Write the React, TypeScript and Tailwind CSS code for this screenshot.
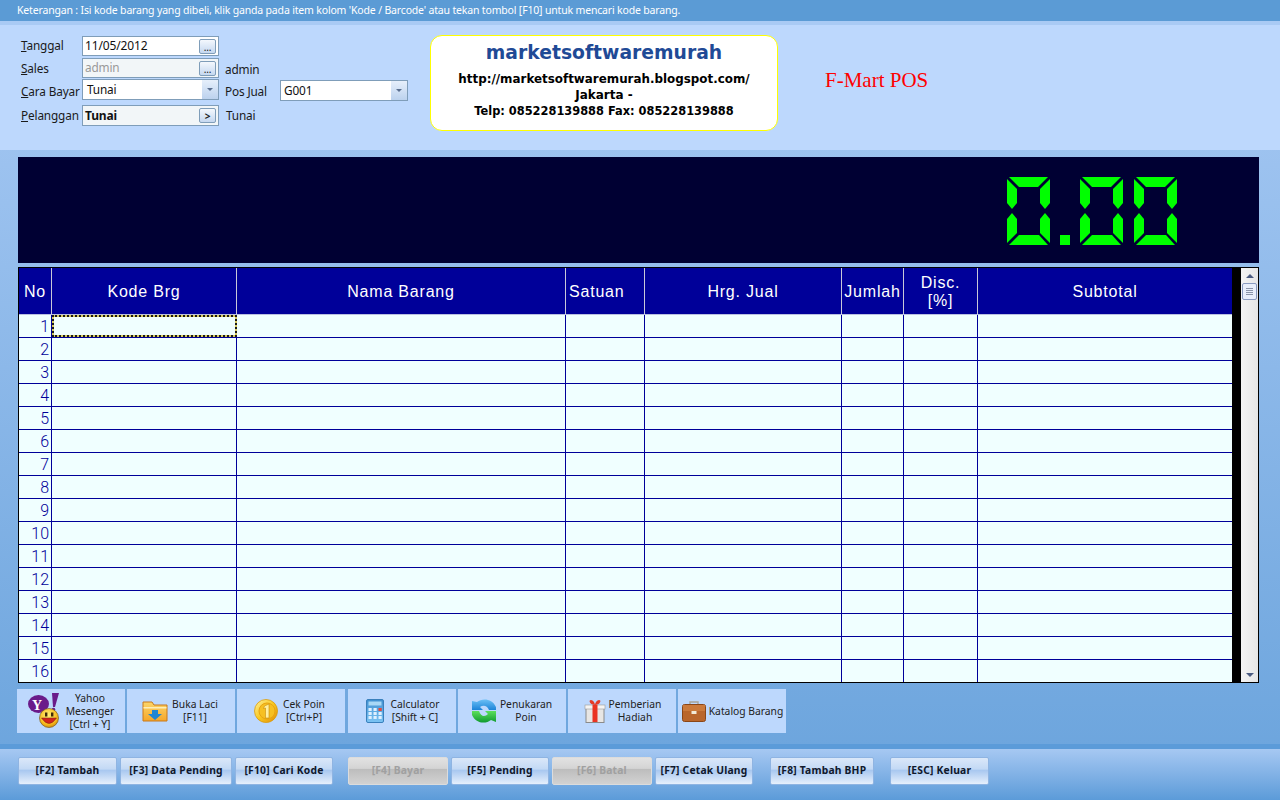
const columns = [
  { label: 'No', width: 'w-[33px]' },
  { label: 'Kode Brg', width: 'w-[185px]' },
  { label: 'Nama Barang', width: 'w-[329px]' },
  { label: 'Satuan', width: 'w-[79px]' },
  { label: 'Hrg. Jual', width: 'w-[197px]' },
  { label: 'Jumlah', width: 'w-[62px]' },
  { label: 'Disc.\n[%]', width: 'w-[74px]' },
  { label: 'Subtotal', width: 'w-[254px]' },
];

const rows = Array.from({ length: 16 }, (_, i) => i + 1);

const Digit = ({ x }: { x: number }) => (
  <g transform={`translate(${x} 0)`} fill="#00ff00">
    <polygon points="2,0 41,0 31,10 12,10" />
    <polygon points="0,2 10,12 10,26 5,32 0,26" />
    <polygon points="43,2 33,12 33,26 38,32 43,26" />
    <polygon points="5,36 10,42 10,56 0,66 0,42" />
    <polygon points="38,36 33,42 33,56 43,66 43,42" />
    <polygon points="2,68 12,58 32,58 41,68" />
  </g>
);

const LedDisplay = () => (
  <svg width="171" height="68" viewBox="0 0 171 68">
    <Digit x={0} />
    <rect x="53" y="58" width="10" height="10" fill="#00ff00" />
    <Digit x={73} />
    <Digit x={127} />
  </svg>
);

const YahooIcon = () => (
  <svg width="34" height="36" viewBox="0 0 34 36">
    <ellipse cx="10.5" cy="11" rx="10.5" ry="9" fill="#6a1b8a" />
    <text x="4" y="17" fontSize="14" fontWeight="700" fill="#fff" fontFamily="Liberation Serif">Y</text>
    <polygon points="24,0 31,0 27,14 25,14" fill="#6a1b8a" />
    <circle cx="25.5" cy="16.5" r="1.8" fill="#6a1b8a" />
    <defs>
      <radialGradient id="smile" cx="45%" cy="35%" r="70%">
        <stop offset="0%" stopColor="#fff07a" />
        <stop offset="70%" stopColor="#f6b91a" />
        <stop offset="100%" stopColor="#c98410" />
      </radialGradient>
    </defs>
    <circle cx="21" cy="25" r="9.5" fill="url(#smile)" stroke="#7a5a1c" strokeWidth="0.7" />
    <path d="M13.5 25 Q21 36 28.5 25 Z" fill="#d3241c" stroke="#7a2010" strokeWidth="0.5" />
    <rect x="17" y="19.5" width="2.4" height="4" fill="#402a08" />
    <rect x="23" y="19.5" width="2.4" height="4" fill="#402a08" />
  </svg>
);

const FolderIcon = () => (
  <svg width="26" height="22" viewBox="0 0 26 22">
    <defs>
      <linearGradient id="folder" x1="0" y1="0" x2="0" y2="1">
        <stop offset="0%" stopColor="#fcd66a" />
        <stop offset="100%" stopColor="#f5a62a" />
      </linearGradient>
    </defs>
    <path d="M1 2 H10 L12 5 H25 V21 H1 Z" fill="url(#folder)" stroke="#c9791a" />
    <rect x="1.5" y="7" width="23" height="1.5" fill="#fdeeb8" />
    <path d="M10 10 H16 V14 H20 L13 20 L6 14 H10 Z" fill="#1f86d4" />
  </svg>
);

const CoinIcon = () => (
  <svg width="24" height="26" viewBox="0 0 24 26">
    <defs>
      <linearGradient id="coin" x1="0" y1="0" x2="1" y2="1">
        <stop offset="0%" stopColor="#fff2a0" />
        <stop offset="50%" stopColor="#f8c81e" />
        <stop offset="100%" stopColor="#e08c08" />
      </linearGradient>
    </defs>
    <circle cx="12" cy="13" r="11.5" fill="url(#coin)" stroke="#d89a10" strokeWidth="0.8" />
    <circle cx="13" cy="13" r="8" fill="#f6c022" stroke="#e8a414" />
    <path d="M10.5 8 L15 6 V20 H11.5 V10 L9.5 10.5 Z" fill="#fff0a0" stroke="#c88a0c" strokeWidth="0.6" />
  </svg>
);

const CalculatorIcon = () => (
  <svg width="18" height="24" viewBox="0 0 18 24">
    <defs>
      <linearGradient id="calc" x1="0" y1="0" x2="0" y2="1">
        <stop offset="0%" stopColor="#3f8fd0" />
        <stop offset="100%" stopColor="#7cc4f4" />
      </linearGradient>
    </defs>
    <rect x="0.5" y="0.5" width="17" height="23" rx="1.5" fill="url(#calc)" stroke="#3a80bc" />
    <rect x="2.5" y="2.5" width="13" height="4" fill="#a8d8f6" />
    {[9, 13, 17].map((y) =>
      [2.5, 7.5, 12.5].map((x) => (
        <rect key={`${x}-${y}`} x={x} y={y} width="3.2" height="3" fill={x === 12.5 && y === 9 ? '#e8483a' : '#dff0ff'} />
      )),
    )}
  </svg>
);

const ExchangeIcon = () => (
  <svg width="26" height="24" viewBox="0 0 26 24">
    <defs>
      <linearGradient id="swapBlue" x1="0" y1="0" x2="0" y2="1">
        <stop offset="0%" stopColor="#6cc0f6" />
        <stop offset="100%" stopColor="#1c84d8" />
      </linearGradient>
      <linearGradient id="swapGreen" x1="0" y1="0" x2="0" y2="1">
        <stop offset="0%" stopColor="#5ce05c" />
        <stop offset="100%" stopColor="#109a30" />
      </linearGradient>
    </defs>
    <path d="M1 2 L6 3 C11 -1 21 -1 25 8 L25 11 H18 C16 6 12 6 9 8 L12 11 H1 Z" fill="url(#swapBlue)" />
    <path d="M25 23 L20 21 C15 25 5 25 1 16 L1 12 H8 C10 18 14 18 17 15 L14 12 H25 Z" fill="url(#swapGreen)" />
  </svg>
);

const GiftIcon = () => (
  <svg width="22" height="24" viewBox="0 0 22 24">
    <rect x="2" y="7" width="18" height="16.5" fill="#e8e6e4" stroke="#8a8a8a" />
    <rect x="1" y="6" width="20" height="4" fill="#f6f4f2" stroke="#9a9a9a" strokeWidth="0.6" />
    <rect x="8.5" y="6" width="5" height="17" fill="#ea3322" />
    <path d="M11 6 C6 6 4 1 7 1 C9 1 11 4 11 6 C11 4 13 1 15 1 C18 1 16 6 11 6 Z" fill="#e53a26" />
  </svg>
);

const BriefcaseIcon = () => (
  <svg width="24" height="22" viewBox="0 0 24 22">
    <path d="M8 5 V2 H16 V5" fill="none" stroke="#a9a396" strokeWidth="1.4" />
    <rect x="0.5" y="4.5" width="23" height="17" rx="2" fill="#b9662c" stroke="#8a4618" />
    <rect x="1" y="5" width="22" height="6" fill="#cb7a3c" />
    <rect x="9.5" y="11" width="5" height="3" fill="#f2ead8" />
  </svg>
);

const quickButtons = [
  { icon: <YahooIcon />, lines: ['Yahoo', 'Mesenger', '[Ctrl + Y]'], box: 'ml-0 pl-[11px]', text: 'w-[56px]' },
  { icon: <FolderIcon />, lines: ['Buka Laci', '[F11]'], box: 'ml-0 pl-[15px]', text: 'w-[54px]' },
  { icon: <CoinIcon />, lines: ['Cek Poin', '[Ctrl+P]'], box: 'ml-0 pl-[17px]', text: 'w-[52px]' },
  { icon: <CalculatorIcon />, lines: ['Calculator', '[Shift + C]'], box: 'ml-[1px] pl-[18px]', text: 'w-[62px]' },
  { icon: <ExchangeIcon />, lines: ['Penukaran', 'Poin'], box: 'ml-0 pl-[13px]', text: 'w-[58px]' },
  { icon: <GiftIcon />, lines: ['Pemberian', 'Hadiah'], box: 'ml-0 pl-[16px]', text: 'w-[58px]' },
  { icon: <BriefcaseIcon />, lines: ['Katalog Barang'], box: 'ml-0 pl-[4px]', text: 'w-[80px]' },
];

const actionButtons = [
  { label: '[F2] Tambah', width: 'w-[99px]', ml: '' },
  { label: '[F3] Data Pending', width: 'w-[112px]', ml: 'ml-[3px]' },
  { label: '[F10] Cari Kode', width: 'w-[98px]', ml: 'ml-[3px]' },
  { label: '[F4] Bayar', width: 'w-[100px]', ml: 'ml-[15px]', off: true },
  { label: '[F5] Pending', width: 'w-[98px]', ml: 'ml-[3px]' },
  { label: '[F6] Batal', width: 'w-[100px]', ml: 'ml-[3px]', off: true },
  { label: '[F7] Cetak Ulang', width: 'w-[98px]', ml: 'ml-[3px]' },
  { label: '[F8] Tambah BHP', width: 'w-[104px]', ml: 'ml-[17px]' },
  { label: '[ESC] Keluar', width: 'w-[99px]', ml: 'ml-[16px]' },
];

const FieldLabel = ({ letter, rest, nudge }: { letter: string; rest: string; nudge: string }) => (
  <span className={`w-[61px] shrink-0 whitespace-nowrap text-[#1a1a1a] ${nudge}`}>
    <span className="underline">{letter}</span>
    {rest}
  </span>
);

const SmallButton = ({ label }: { label: string }) => (
  <span className="flex h-[15px] w-[17px] items-end justify-center rounded-[2px] border border-[#7f9db9] bg-gradient-to-b from-[#f4f8fd] to-[#c5d8f0] text-[10px] leading-[12px] text-[#222]">
    {label}
  </span>
);

const ComboArrow = () => (
  <span className="flex h-full w-[16px] items-center justify-center bg-gradient-to-b from-[#e6effb] to-[#bcd2ee]">
    <span className="h-0 w-0 border-x-[3px] border-t-[3px] border-x-transparent border-t-[#5a6f8f]" />
  </span>
);

export default function App() {
  return (
    <div className="flex h-[800px] w-[1280px] flex-col overflow-hidden bg-gradient-to-b from-[#a9caf4] to-[#69a3dc] font-['Noto_Sans',sans-serif]">
      {/* hint bar */}
      <div className="flex h-[21px] shrink-0 items-center bg-[#5b9bd5] pl-[17px] text-[10.5px] tracking-[-0.17px] whitespace-nowrap text-white">
        Keterangan : Isi kode barang yang dibeli, klik ganda pada item kolom 'Kode / Barcode' atau tekan tombol [F10] untuk mencari kode barang.
      </div>

      {/* header form */}
      <div className="flex h-[129px] shrink-0 border-t-[4px] border-[#a9caf4] bg-[#bdd8fd]">
        <div className="mt-[11px] ml-[21px] flex w-[409px] shrink-0 flex-col text-[11.8px] tracking-[-0.15px]">
          <div className="flex h-[20px] items-center">
            <FieldLabel letter="T" rest="anggal" nudge="mt-0" />
            <div className="flex h-[20px] w-[137px] items-center justify-between border border-[#7f9db9] bg-white px-[2px] text-[12px] text-[#111]">
              11/05/2012
              <SmallButton label="..." />
            </div>
          </div>
          <div className="mt-[2px] flex h-[20px] items-center">
            <FieldLabel letter="S" rest="ales" nudge="mt-[2px]" />
            <div className="flex h-[20px] w-[137px] items-center justify-between border border-[#7f9db9] bg-[#f2f6f8] px-[2px] text-[#999]">
              <span className="-mt-[1px]">admin</span>
              <SmallButton label="..." />
            </div>
            <span className="mt-[3px] ml-[6px] text-[#1a1a1a]">admin</span>
          </div>
          <div className="mt-[1px] flex h-[21px] items-center">
            <FieldLabel letter="C" rest="ara Bayar" nudge="mt-[5px]" />
            <div className="flex h-[21px] w-[137px] items-center justify-between border border-[#7f9db9] bg-white pl-[4px] text-[#111]">
              Tunai
              <ComboArrow />
            </div>
            <span className="mt-[5px] ml-[6px] w-[55px] text-[#1a1a1a]">Pos Jual</span>
            <div className="mt-[2px] flex h-[21px] w-[128px] items-center justify-between border border-[#7f9db9] bg-white pl-[3px] text-[#111]">
              G001
              <ComboArrow />
            </div>
          </div>
          <div className="mt-[5px] flex h-[21px] items-center">
            <FieldLabel letter="P" rest="elanggan" nudge="mt-0" />
            <div className="flex h-[21px] w-[137px] items-center justify-between border border-[#7f9db9] bg-[#f2f6f8] px-[2px] text-[12px] font-bold text-[#111]">
              Tunai
              <SmallButton label=">" />
            </div>
            <span className="ml-[7px] text-[#1a1a1a]">Tunai</span>
          </div>
        </div>

        <div className="mt-[10px] flex h-[96px] w-[348px] shrink-0 flex-col items-center rounded-[12px] border border-[#ffff00] bg-white font-['DejaVu_Sans',sans-serif]">
          <div className="mt-[3px] text-[18.75px] leading-[28px] font-bold text-[#1f4a96]">marketsoftwaremurah</div>
          <div className="mt-[4px] text-center leading-[16px] font-bold text-black">
            <div className="text-[11.9px]">http://marketsoftwaremurah.blogspot.com/</div>
            <div className="text-[12px]">Jakarta -</div>
            <div className="text-[11.4px]">Telp: 085228139888 Fax: 085228139888</div>
          </div>
        </div>

        <div className="mt-[43px] ml-[47px] font-['Liberation_Serif',serif] text-[21px] leading-[24px] text-[#ff0000]">F-Mart POS</div>
      </div>

      {/* total display */}
      <div className="mt-[7px] ml-[18px] flex h-[106px] w-[1241px] shrink-0 items-start justify-end bg-[#000033] pt-[20px] pr-[81px]">
        <LedDisplay />
      </div>

      {/* grid */}
      <div className="mt-[4px] ml-[18px] flex h-[416px] w-[1241px] shrink-0 border border-black bg-black">
        <div className="w-[1213px] shrink-0 overflow-hidden">
          <div className="flex h-[47px] border-b border-[#b9c0e0] bg-[#000099] font-['Liberation_Sans',sans-serif] text-[16px] tracking-[0.8px] text-white">
            {columns.map((col, i) => (
              <div
                key={col.label}
                className={`${col.width} flex shrink-0 items-center pt-[1px] leading-[18px] whitespace-pre-line ${
                  col.label === 'Satuan' ? 'justify-start pl-[3px]' : 'justify-center text-center'
                } ${i < columns.length - 1 ? 'border-r border-[#c8c8d8]' : ''}`}
              >
                {col.label}
              </div>
            ))}
          </div>
          {rows.map((row) => (
            <div key={row} className="flex h-[23px] border-b border-[#000099] bg-[#f0ffff]">
              {columns.map((col, i) => {
                if (i === 0)
                  return (
                    <div
                      key={col.label}
                      className={`${col.width} shrink-0 border-r border-[#000099] pr-[2px] text-right font-['Roboto',sans-serif] text-[16px] leading-[23px] font-light text-[#000099]`}
                    >
                      {row}
                    </div>
                  );
                if (i === 1 && row === 1)
                  return (
                    <div key={col.label} className={`${col.width} shrink-0 border-2 border-dotted border-[#1a1a1a] bg-[#d8cc60]`}>
                      <div className="h-full bg-[#f0ffff]" />
                    </div>
                  );
                return (
                  <div
                    key={col.label}
                    className={`${col.width} shrink-0 ${i < columns.length - 1 ? 'border-r border-[#000099]' : ''}`}
                  />
                );
              })}
            </div>
          ))}
        </div>
        <div className="ml-[9px] flex w-[17px] shrink-0 flex-col items-center bg-gradient-to-r from-[#f4f4f4] to-[#e6e6e6] pt-[6px] pb-[5px]">
          <span className="h-0 w-0 border-x-[4px] border-b-[4px] border-x-transparent border-b-[#4a5a80]" />
          <span className="mt-[5px] flex h-[17px] w-[15px] flex-col items-center justify-center gap-[1px] rounded-[2px] border border-[#8a9bc0] bg-[#e8eefa]">
            <span className="h-[1px] w-[7px] bg-[#8a94a8]" />
            <span className="h-[1px] w-[7px] bg-[#8a94a8]" />
            <span className="h-[1px] w-[7px] bg-[#8a94a8]" />
            <span className="h-[1px] w-[7px] bg-[#8a94a8]" />
          </span>
          <span className="mt-auto h-0 w-0 border-x-[4px] border-t-[4px] border-x-transparent border-t-[#4a5a80]" />
        </div>
      </div>

      {/* quick buttons */}
      <div className="mt-[6px] ml-[17px] flex shrink-0 gap-[2px]">
        {quickButtons.map((btn) => (
          <div key={btn.lines[0]} className={`flex h-[44px] w-[108px] items-center bg-[#bdd8fd] ${btn.box}`}>
            <span className="flex shrink-0 items-center justify-center">{btn.icon}</span>
            <span className={`${btn.text} shrink-0 text-center text-[10.3px] leading-[13px] text-[#222]`}>
              {btn.lines.map((line) => (
                <div key={line} className="whitespace-nowrap">{line}</div>
              ))}
            </span>
          </div>
        ))}
      </div>

      {/* action bar */}
      <div className="mt-auto flex h-[56px] shrink-0 border-t-[5px] border-[#5b9bd9] bg-gradient-to-b from-[#a6c8f2] to-[#5b9bd9] pt-[8px] pl-[18px]">
        {actionButtons.map((btn) => (
          <div
            key={btn.label}
            className={`${btn.width} ${btn.ml} flex h-[28px] shrink-0 items-center justify-center rounded-[2px] border text-[10.3px] font-bold tracking-[0.2px] ${
              btn.off
                ? 'border-[#dcdcdc] bg-[linear-gradient(#e2e2e2,#d4d4d4_40%,#bdbdbd_44%,#d2d2d2)] text-[#a0a0a0]'
                : 'border-[#8fb4e2] bg-[linear-gradient(#dbe8f9,#c3d9f5_42%,#a9c8f0_48%,#e6f0fc)] text-[#10182c]'
            }`}
          >
            {btn.label}
          </div>
        ))}
      </div>
    </div>
  );
}
